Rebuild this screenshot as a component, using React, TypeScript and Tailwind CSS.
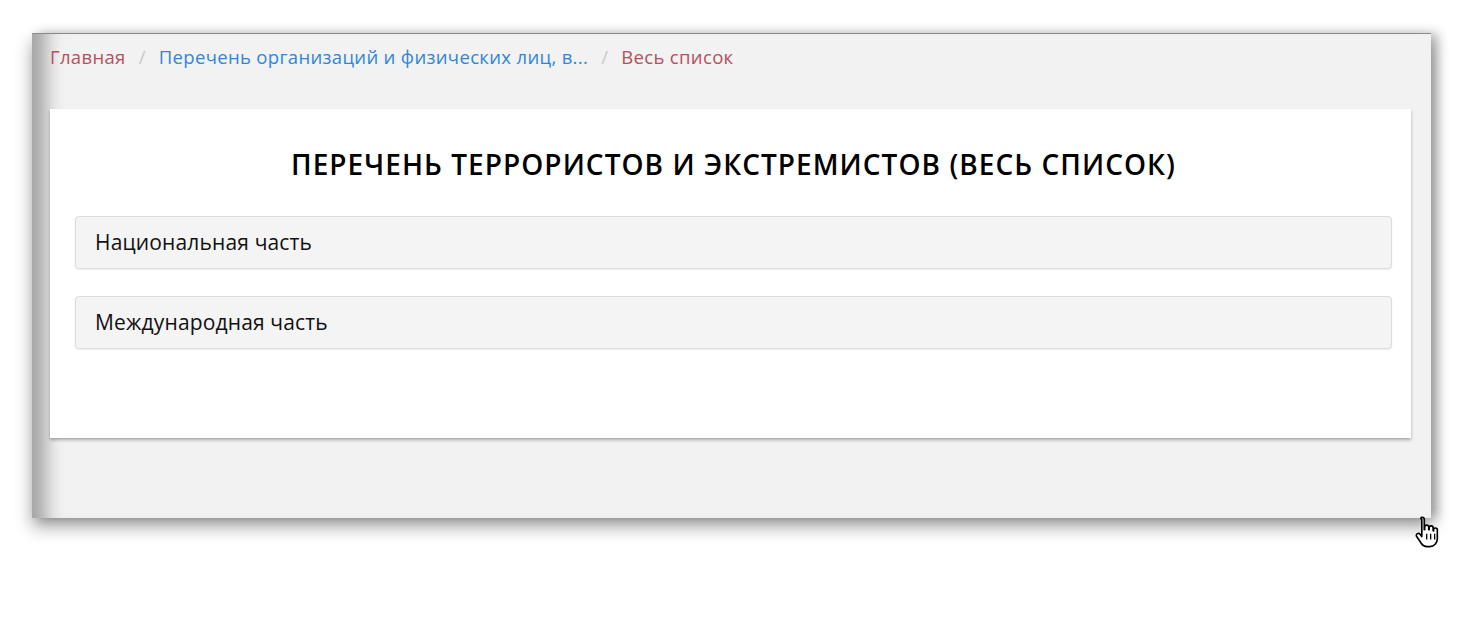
import React from "react"

const items = ["Национальная часть", "Международная часть"]

function HandCursor() {
  return (
    <svg width="28" height="36" viewBox="0 0 24 30" className="absolute left-[1414px] top-[514px]">
      <path
        d="M7 2.5c1 0 1.8.8 1.8 1.8V13h.4v-2.2c0-1 .8-1.7 1.7-1.7s1.7.8 1.7 1.7V13h.4v-1.5c0-1 .8-1.7 1.7-1.7s1.7.8 1.7 1.7V14h.4v-.8c0-1 .8-1.6 1.6-1.6s1.6.7 1.6 1.6v7.6c0 3.6-2.8 6.7-6.4 6.7h-2.6c-2 0-3.6-1-4.7-2.6l-4-6c-.6-.9-.3-2 .6-2.5.8-.4 1.8-.2 2.3.5l1.5 2V4.3C5.2 3.3 6 2.5 7 2.5z"
        fill="#fff"
        stroke="#000"
        strokeWidth="1.4"
        strokeLinejoin="round"
      />
      <path d="M10.9 16.5v5M14.3 16.5v5M17.7 16.5v5" stroke="#000" strokeWidth="1.1" />
    </svg>
  )
}

export default function App() {
  return (
    <div className="relative w-[1464px] h-[630px] bg-white pt-[33px] pl-[32px]" style={{ fontFamily: '"Open Sans", "Noto Sans", sans-serif' }}>
      {/* окно */}
      <div className="w-[1399px] h-[485px] bg-[#f2f2f2] border-t border-[#8a8a8a] shadow-[inset_28px_0_18px_-14px_rgba(0,0,0,0.32),0_9px_16px_rgba(0,0,0,0.35),7px_0_10px_rgba(0,0,0,0.25)] pl-[18px]">
        {/* хлебные крошки */}
        <div className="flex items-center h-[46px] text-[18.5px] leading-none tracking-[0.33px]">
          <span className="text-[#b5505f]">Главная</span>
          <span className="px-[13px] text-[#c8c8c8]">/</span>
          <span className="text-[#2f86dd]">Перечень организаций и физических лиц, в...</span>
          <span className="px-[13px] text-[#c8c8c8]">/</span>
          <span className="text-[#b5505f]">Весь список</span>
        </div>

        {/* карточка */}
        <div className="mt-[29px] w-[1361px] h-[329px] bg-white shadow-[0_2px_3px_rgba(0,0,0,0.3)] pl-[25px] pr-[19px] pt-[35px]">
          <h1 className="text-center text-[28px] font-semibold text-black leading-[40px] tracking-[1.05px]">
            ПЕРЕЧЕНЬ ТЕРРОРИСТОВ И ЭКСТРЕМИСТОВ (ВЕСЬ СПИСОК)
          </h1>
          <div className="mt-[32px] flex flex-col gap-[27px]">
            {items.map((t) => (
              <div
                key={t}
                className="h-[53px] flex items-center px-[19px] bg-[#f4f4f4] border border-[#dcdcdc] rounded-[4px] shadow-[0_1px_2px_rgba(0,0,0,0.08)] text-[21px] text-[#111] tracking-[0.15px]"
              >
                {t}
              </div>
            ))}
          </div>
        </div>
      </div>
      <HandCursor />
    </div>
  )
}
